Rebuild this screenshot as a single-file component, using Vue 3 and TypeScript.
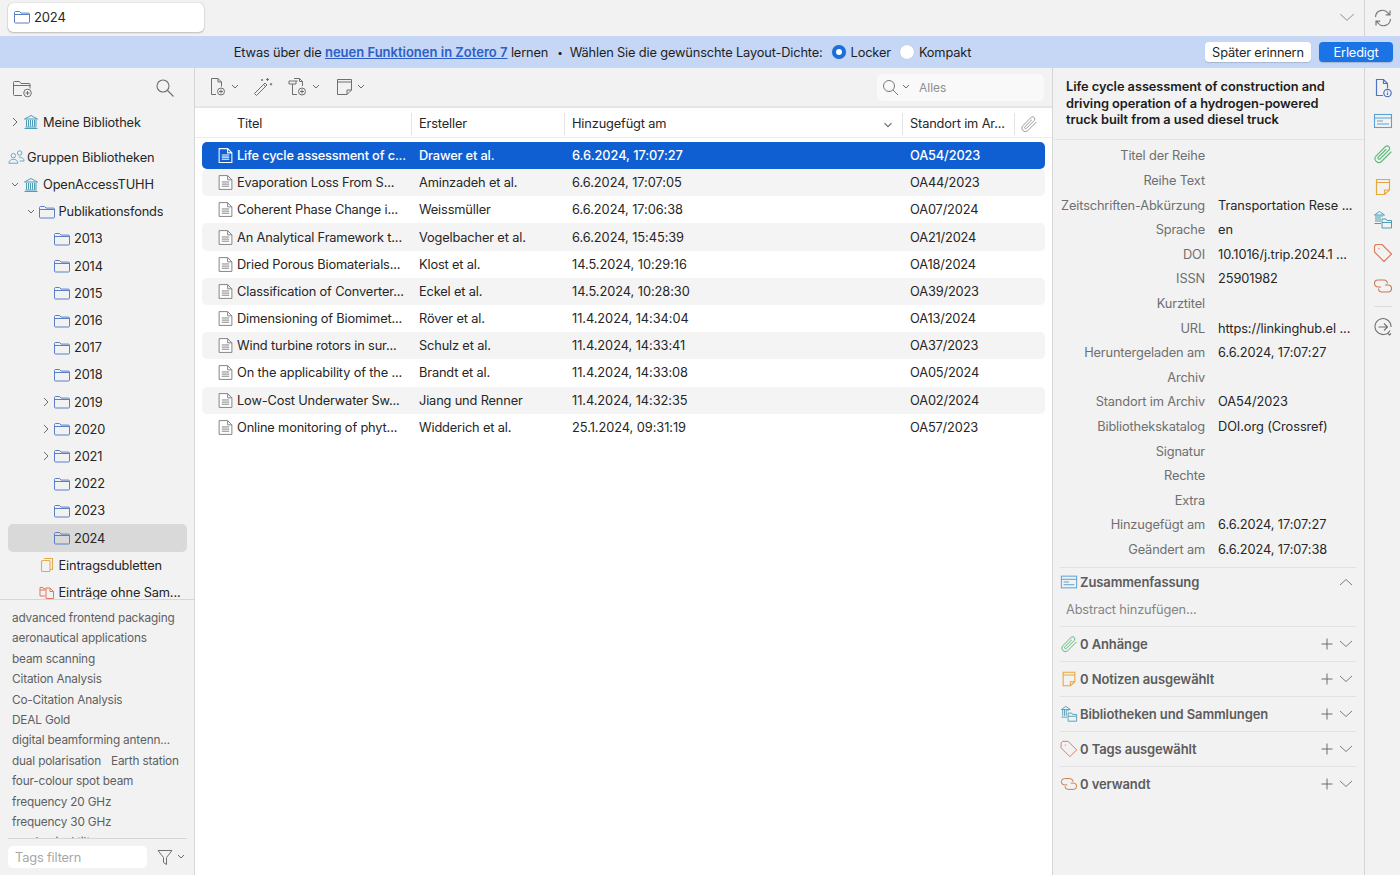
<script setup lang="ts">
interface TreeRow { label: string; indent: number; icon: string; arrow?: 'right' | 'down'; selected?: boolean; gap?: boolean }
const folders: TreeRow[] = ['2013','2014','2015','2016','2017','2018','2019','2020','2021','2022','2023','2024'].map((y) => ({
  label: y, indent: 2, icon: 'i-folder',
  arrow: ['2019','2020','2021'].includes(y) ? 'right' as const : undefined,
  selected: y === '2024',
}))
const tree: TreeRow[] = [
  { label: 'OpenAccessTUHH', indent: 0, icon: 'i-library', arrow: 'down' },
  { label: 'Publikationsfonds', indent: 1, icon: 'i-folder', arrow: 'down' },
  ...folders,
  { label: 'Eintragsdubletten', indent: 1, icon: 'i-dup' },
  { label: 'Einträge ohne Sam...', indent: 1, icon: 'i-unfiled' },
]
const tags: string[][] = [
  ['advanced frontend packaging'], ['aeronautical applications'], ['beam scanning'], ['Citation Analysis'],
  ['Co-Citation Analysis'], ['DEAL Gold'], ['digital beamforming antenn...'], ['dual polarisation', 'Earth station'],
  ['four-colour spot beam'], ['frequency 20 GHz'], ['frequency 30 GHz'], ['mechanical tilt'],
]
const items = [
  ['Life cycle assessment of c...', 'Drawer et al.', '6.6.2024, 17:07:27', 'OA54/2023'],
  ['Evaporation Loss From S...', 'Aminzadeh et al.', '6.6.2024, 17:07:05', 'OA44/2023'],
  ['Coherent Phase Change i...', 'Weissmüller', '6.6.2024, 17:06:38', 'OA07/2024'],
  ['An Analytical Framework t...', 'Vogelbacher et al.', '6.6.2024, 15:45:39', 'OA21/2024'],
  ['Dried Porous Biomaterials...', 'Klost et al.', '14.5.2024, 10:29:16', 'OA18/2024'],
  ['Classification of Converter...', 'Eckel et al.', '14.5.2024, 10:28:30', 'OA39/2023'],
  ['Dimensioning of Biomimet...', 'Röver et al.', '11.4.2024, 14:34:04', 'OA13/2024'],
  ['Wind turbine rotors in sur...', 'Schulz et al.', '11.4.2024, 14:33:41', 'OA37/2023'],
  ['On the applicability of the ...', 'Brandt et al.', '11.4.2024, 14:33:08', 'OA05/2024'],
  ['Low-Cost Underwater Sw...', 'Jiang und Renner', '11.4.2024, 14:32:35', 'OA02/2024'],
  ['Online monitoring of phyt...', 'Widderich et al.', '25.1.2024, 09:31:19', 'OA57/2023'],
]
const fields = [
  ['Titel der Reihe', ''], ['Reihe Text', ''], ['Zeitschriften-Abkürzung', 'Transportation Rese ...'], ['Sprache', 'en'],
  ['DOI', '10.1016/j.trip.2024.1 ...'], ['ISSN', '25901982'], ['Kurztitel', ''], ['URL', 'https://linkinghub.el ...'],
  ['Heruntergeladen am', '6.6.2024, 17:07:27'], ['Archiv', ''], ['Standort im Archiv', 'OA54/2023'],
  ['Bibliothekskatalog', 'DOI.org (Crossref)'], ['Signatur', ''], ['Rechte', ''], ['Extra', ''],
  ['Hinzugefügt am', '6.6.2024, 17:07:27'], ['Geändert am', '6.6.2024, 17:07:38'],
]
const sections = [
  { label: '0 Anhänge', icon: 'i-clip' }, { label: '0 Notizen ausgewählt', icon: 'i-note' },
  { label: 'Bibliotheken und Sammlungen', icon: 'i-libs' }, { label: '0 Tags ausgewählt', icon: 'i-tag' },
  { label: '0 verwandt', icon: 'i-link' },
]
const rail = ['i-info', 'i-abstract', 'i-clip', 'i-note', 'i-libs', 'i-tag', 'i-link']
</script>

<template>
  <div class="app">
    <svg class="defs" aria-hidden="true">
      <symbol id="i-folder" viewBox="0 0 16 16"><path d="M.5 3.600C.5 2.900 1 2.500 1.500 2.500h4.100l1.400 1.600h7.500c.6 0 1 .4 1 1v7.900c0 .6-.4 1-1 1H1.500c-.6 0-1-.4-1-1zM.5 5.500h15" fill="none" stroke="#5b7fc7" stroke-width="1"/></symbol>
      <symbol id="i-library" viewBox="0 0 16 16"><g fill="none" stroke="#4d9db8" stroke-width="1"><path d="M1.500 5 8 1.500 14.500 5zM1.500 14.500h13M2.500 13h11"/><path d="M3.500 6v6.500M5.500 6v6.500M7.500 6v6.500M9.500 6v6.500M11.500 6v6.500M13 6v6.500"/></g></symbol>
      <symbol id="i-dup" viewBox="0 0 16 16"><g fill="none" stroke="#e2ac4d" stroke-width="1.100"><path d="M5 1.500h8.500v11H11"/><rect x="2.500" y="3.500" width="8.500" height="11" rx="1"/></g></symbol>
      <symbol id="i-unfiled" viewBox="0 0 16 16"><g fill="none" stroke="#e0775c" stroke-width="1"><path d="M1 6V3.500h3l1 1.500h2M1 6v6h5M1 6h5"/><path d="M7 4h4l3.500 3.500v7H7zM11 4v3.500h3.500"/></g></symbol>
      <symbol id="i-doc" viewBox="0 0 16 16"><path d="M2 1.500h8L14 5.500v9H2zM10 1.500v4h4M4.500 7.500h7M4.500 9.500h7M4.500 11.500h7" fill="#fff" stroke="#808080" stroke-width=".9"/></symbol>
      <symbol id="i-doc-sel" viewBox="0 0 16 16"><path d="M2 1.500h8L14 5.500v9H2zM10 1.500v4h4M4.500 7.500h7M4.500 9.500h7M4.500 11.500h7" fill="#0f5fd2" stroke="#fff" stroke-width="1"/></symbol>
      <symbol id="i-info" viewBox="0 0 20 20"><g fill="none" stroke="#4f74c4" stroke-width="1.200"><path d="M10 17.500H3.500v-16h7l4 4v5M10.500 1.500v4h4"/><circle cx="14.500" cy="15" r="3.700"/><path d="M14.500 14.500v2.500M14.500 12.800v.7"/></g></symbol>
      <symbol id="i-abstract" viewBox="0 0 20 20"><g fill="none" stroke="#5aa1d6" stroke-width="1.100"><rect x="1.500" y="3.500" width="17" height="13"/><path d="M1.500 7h17M4 10h6M4 13h12"/></g></symbol>
      <symbol id="i-clip" viewBox="0 0 20 20"><path d="M18 8 8.500 17.500a3.900 3.900 0 0 1-5.500-5.500L12.500 2.500a2.500 2.500 0 0 1 3.500 3.500L7 15a1.300 1.300 0 0 1-1.800-1.800L13 5.500" fill="none" stroke="#5cb878" stroke-width="1.100" stroke-linecap="round"/></symbol>
      <symbol id="i-note" viewBox="0 0 20 20"><path d="M3.500 2.500h13V13l-5 4.500h-8zM3.500 5.500h13M16.500 13H11.500v4.500" fill="none" stroke="#e8a73d" stroke-width="1.200"/></symbol>
      <symbol id="i-libs" viewBox="0 0 20 20"><g fill="none" stroke="#4d9db8" stroke-width="1"><path d="M1.500 5 6.500 1.500 11.500 5zM1.500 13.500h6.500M3 5.500v6.500M5 5.500v6.500M7 5.500v6.500M9 5.500v1.500"/><path d="M9 10.500V9h4l1 1.500h4.500v7.500H9zM9 12.500h9.500"/></g></symbol>
      <symbol id="i-tag" viewBox="0 0 20 20"><path d="M1.500 3 3 1.500H9L18.500 11l-7.500 7.500-9.500-9.500zM5.700 5.700h.4" fill="none" stroke="#e07a5f" stroke-width="1.100" stroke-linejoin="round" stroke-linecap="round"/></symbol>
      <symbol id="i-link" viewBox="0 0 20 20"><g fill="none" stroke="#c97b4e" stroke-width="1.100"><path d="M8 11H5a3.500 3.500 0 0 1 0-7h6a3.500 3.500 0 0 1 3.500 3.500"/><path d="M12 9h3a3.500 3.500 0 0 1 0 7H9a3.500 3.500 0 0 1-3.500-3.500"/></g></symbol>
      <symbol id="i-plus" viewBox="0 0 12 12"><path d="M6 .5v11M.5 6h11" fill="none" stroke="#6d6d6d" stroke-width="1"/></symbol>
      <symbol id="i-down" viewBox="0 0 14 8"><path d="M1 1l6 5.500L13 1" fill="none" stroke="#7d7d7d" stroke-width="1"/></symbol>
      <symbol id="i-mini" viewBox="0 0 8 6"><path d="M1 1l3 3 3-3" fill="none" stroke="#6a6a6a" stroke-width="1"/></symbol>
      <symbol id="i-right" viewBox="0 0 6 10"><path d="M1 1l4 4-4 4" fill="none" stroke="#6a6a6a" stroke-width="1"/></symbol>
    </svg>

    <header class="topbar">
      <div class="tab">
        <svg class="ic16"><use href="#i-folder" /></svg>
        <span>2024</span>
      </div>
      <div class="grow"></div>
      <svg class="top-chevron"><use href="#i-down" /></svg>
      <div class="top-sync">
        <svg width="20" height="20" viewBox="0 0 20 20" fill="none" stroke="#7a7a7a" stroke-width="1.200">
          <path d="M2.500 9a7 7 0 0 1 12.500-4l1.500 1.800M17 2.500v4.300h-4.300" />
          <path d="M17.500 11a7 7 0 0 1-12.500 4l-1.500-1.800M3 17.500v-4.300h4.300" />
        </svg>
      </div>
    </header>

    <div class="banner">
      <div class="banner-msg">
        <span>Etwas über die <a class="link">neuen Funktionen in Zotero 7</a> lernen</span>
        <span class="dot">•</span>
        <span>Wählen Sie die gewünschte Layout-Dichte:</span>
        <span class="radio on"></span><span class="radio-label">Locker</span>
        <span class="radio"></span><span>Kompakt</span>
      </div>
      <button class="btn">Später erinnern</button>
      <button class="btn primary">Erledigt</button>
    </div>

    <main class="main">
      <aside class="left">
        <div class="left-tools">
          <svg width="22" height="22" viewBox="0 0 22 22" fill="none" stroke="#6f6f6f" stroke-width="1">
            <path d="M11 18.500H3.500a1 1 0 0 1-1-1V5.500a1 1 0 0 1 1-1h5l1.500 2h8a1 1 0 0 1 1 1v4M2.500 8.500h17" />
            <circle cx="16.500" cy="16" r="3.800" /><path d="M16.500 14v4M14.500 16h4" />
          </svg>
          <svg width="20" height="20" viewBox="0 0 20 20" fill="none" stroke="#6f6f6f" stroke-width="1.100">
            <circle cx="8" cy="8" r="6" /><path d="M12.500 12.500l6 6" />
          </svg>
        </div>
        <div class="tree">
          <div class="tree-row lib">
            <span class="arrow"><svg class="right"><use href="#i-right" /></svg></span>
            <svg class="ic16"><use href="#i-library" /></svg>
            <span class="tree-label">Meine Bibliothek</span>
          </div>
          <div class="tree-row groups">
            <svg width="17" height="16" viewBox="0 0 19 17" fill="none" stroke="#5aa3c7" stroke-width="1">
              <circle cx="6" cy="7" r="2.500" /><circle cx="13" cy="4" r="2.500" />
              <path d="M1 15.500c0-6 10-6 10 0zM12 8.500c3 0 6 1.500 6 4.500h-5" />
            </svg>
            <span class="tree-label">Gruppen Bibliotheken</span>
          </div>
          <div v-for="r in tree" :key="r.label" class="tree-row" :class="['lvl' + r.indent, { selected: r.selected }]">
            <span class="arrow">
              <svg v-if="r.arrow === 'right'" class="right"><use href="#i-right" /></svg>
              <svg v-else-if="r.arrow === 'down'" class="mini"><use href="#i-mini" /></svg>
            </span>
            <svg class="ic16"><use :href="'#' + r.icon" /></svg>
            <span class="tree-label">{{ r.label }}</span>
          </div>
        </div>
        <div class="tags">
          <div v-for="(row, i) in tags" :key="i" class="tag-row">
            <span v-for="t in row" :key="t">{{ t }}</span>
          </div>
        </div>
        <div class="tag-filter">
          <div class="tag-input">Tags filtern</div>
          <svg width="16" height="17" viewBox="0 0 16 17" fill="none" stroke="#6f6f6f" stroke-width="1">
            <path d="M1 1.500h14L9.500 8.500v7l-3-2v-5z" />
          </svg>
          <svg class="mini"><use href="#i-mini" /></svg>
        </div>
      </aside>

      <section class="center">
        <div class="toolbar">
          <span class="tool">
            <svg width="20" height="20" viewBox="0 0 20 20" fill="none" stroke="#6f6f6f" stroke-width="1">
              <path d="M8 17.500H3.500v-16h6.500l3.500 3.500v4.500M10 1.500V5h3.500" /><circle cx="13" cy="14.500" r="3.500" /><path d="M13 12.500v4M11 14.500h4" />
            </svg>
            <svg class="mini"><use href="#i-mini" /></svg>
          </span>
          <span class="tool wand">
            <svg width="20" height="20" viewBox="0 0 20 20" fill="none" stroke="#6f6f6f" stroke-width="1">
              <path d="M1.500 16.500 12 6l2 2L3.500 18.500zM10.500 7.500l2 2" />
              <path d="M14.500 1v3M13 2.500h3M18 6v2.500M16.800 7.200h2.400M9 2v2M8 3h2" />
            </svg>
          </span>
          <span class="tool">
            <svg width="22" height="20" viewBox="0 0 22 20" fill="none" stroke="#6f6f6f" stroke-width="1">
              <path d="M10 17.500H5.500V7M2 7V4h8.500M7 1.500h5.500l3 3v4.500M12.500 1.500V4.500h3M2 7h7V4" /><circle cx="15" cy="14.500" r="3.500" /><path d="M15 12.500v4M13 14.500h4" />
            </svg>
            <svg class="mini"><use href="#i-mini" /></svg>
          </span>
          <span class="tool note-tool">
            <svg width="18" height="20" viewBox="0 0 18 20" fill="none" stroke="#6f6f6f" stroke-width="1">
              <path d="M1.500 2.500h14V13l-4.500 4.500H1.500zM1.500 5h14M15.500 13H11v4.500" />
            </svg>
            <svg class="mini"><use href="#i-mini" /></svg>
          </span>
          <div class="grow"></div>
          <div class="search">
            <svg width="17" height="17" viewBox="0 0 17 17" fill="none" stroke="#7a7a7a" stroke-width="1">
              <circle cx="7" cy="7" r="5.500" /><path d="M11 11l5 5" />
            </svg>
            <svg class="mini"><use href="#i-mini" /></svg>
            <span class="search-text">Alles</span>
          </div>
        </div>
        <div class="grid-row head">
          <div class="cell title-head">Titel</div>
          <div class="cell bordered">Ersteller</div>
          <div class="cell bordered sort">Hinzugefügt am<svg class="sort-ic"><use href="#i-mini" /></svg></div>
          <div class="cell bordered">Standort im Ar...</div>
          <div class="cell bordered clip-head">
            <svg width="18" height="18" viewBox="0 0 20 20" fill="none" stroke="#9a9a9a" stroke-width="1.100" stroke-linecap="round">
              <path d="M18 8 8.500 17.500a3.900 3.900 0 0 1-5.500-5.500L12.500 2.500a2.500 2.500 0 0 1 3.500 3.500L7 15a1.300 1.300 0 0 1-1.800-1.800L13 5.500" />
            </svg>
          </div>
        </div>
        <div class="rows">
          <div v-for="(it, i) in items" :key="i" class="grid-row item" :class="{ sel: i === 0, alt: i % 2 === 1 }">
            <div class="cell title-cell">
              <svg class="doc"><use :href="i === 0 ? '#i-doc-sel' : '#i-doc'" /></svg>
              <span>{{ it[0] }}</span>
            </div>
            <div class="cell">{{ it[1] }}</div>
            <div class="cell num">{{ it[2] }}</div>
            <div class="cell">{{ it[3] }}</div>
            <div class="cell"></div>
          </div>
        </div>
      </section>

      <section class="detail">
        <h1 class="detail-title">Life cycle assessment of construction and driving operation of a hydrogen-powered truck built from a used diesel truck</h1>
        <div class="fields">
          <template v-for="f in fields" :key="f[0]">
            <div class="f-label">{{ f[0] }}</div>
            <div class="f-value">{{ f[1] }}</div>
          </template>
        </div>
        <div class="sec first">
          <svg class="sec-ic"><use href="#i-abstract" /></svg>
          <span class="sec-label">Zusammenfassung</span>
          <svg class="sec-chev up"><use href="#i-down" /></svg>
        </div>
        <div class="abstract">Abstract hinzufügen...</div>
        <div v-for="s in sections" :key="s.label" class="sec">
          <svg class="sec-ic"><use :href="'#' + s.icon" /></svg>
          <span class="sec-label">{{ s.label }}</span>
          <svg class="sec-plus"><use href="#i-plus" /></svg>
          <svg class="sec-chev"><use href="#i-down" /></svg>
        </div>
      </section>

      <nav class="rail">
        <svg v-for="r in rail" :key="r" class="rail-ic"><use :href="'#' + r" /></svg>
        <div class="rail-sep"></div>
        <svg width="20" height="20" viewBox="0 0 20 20" fill="none" stroke="#707070" stroke-width="1.100">
          <path d="M17 13.500A8 8 0 1 1 18 10M5.500 10h9M11 6.500l3.500 3.500-3.500 3.500" />
          <path d="M15 16.500l1.500 1.500 1.500-1.500" />
        </svg>
      </nav>
    </main>
  </div>
</template>

<style scoped>
.app { width: 1400px; height: 875px; overflow: hidden; display: flex; flex-direction: column; background: #f2f2f2; font-family: Inter, "Liberation Sans", sans-serif; font-size: 12.8px; color: #262626; letter-spacing: -0.15px; }
.defs { width: 0; height: 0; position: absolute; }
.grow { flex: 1; }
.ic16 { width: 16px; height: 16px; flex: none; }
.mini { width: 8px; height: 6px; flex: none; }
.right { width: 6px; height: 10px; flex: none; }

.topbar { height: 36px; flex: none; display: flex; align-items: center; padding-left: 8px; box-sizing: border-box; }
.tab { width: 196px; height: 29px; box-sizing: border-box; margin-top: -2px; background: #fff; border-radius: 5px; box-shadow: 0 0 1px rgba(0,0,0,.35), 0 1px 2px rgba(0,0,0,.2); display: flex; align-items: center; gap: 4px; padding-left: 6px; font-size: 13px; }
.top-chevron { width: 16px; height: 9px; margin-right: 9px; margin-top: -1px; opacity: .6; }
.top-sync { width: 35px; height: 36px; border-left: 1px solid #d4d4d4; display: flex; align-items: center; justify-content: center; box-sizing: content-box; }

.banner { height: 32px; flex: none; background: #c5d7f5; display: flex; align-items: center; padding: 0 7px 0 0; color: #1e1e1e; }
.banner-msg { flex: 1; display: flex; align-items: center; justify-content: center; padding-left: 8px; }
.link { color: #2c5fc7; font-weight: 600; text-decoration: underline; letter-spacing: 0; font-size: 13px; }
.dot { margin: 0 7px 0 9px; font-size: 10px; }
.radio { width: 14px; height: 14px; border-radius: 50%; background: #fff; margin: 0 5px 0 9px; box-sizing: border-box; box-shadow: 0 0 1px rgba(0,0,0,.2); }
.radio.on { background: #fff; border: 4px solid #1a6fdc; }
.btn { height: 20px; box-sizing: border-box; width: 106px; border: 0; border-radius: 4px; background: #fff; font: inherit; letter-spacing: inherit; color: #262626; padding: 0; box-shadow: 0 1px 1px rgba(0,0,0,.15); margin-left: 8px; }
.btn.primary { width: 74px; background: #1a74e6; color: #fff; margin-left: 8px; }

.main { flex: 1; min-height: 0; display: flex; }
.left { width: 195px; flex: none; box-sizing: border-box; border-right: 1px solid #d6d6d6; display: flex; flex-direction: column; }
.left-tools { height: 40px; flex: none; display: flex; align-items: center; justify-content: space-between; padding: 0 19px 0 11px; }
.tree { height: 492px; flex: none; overflow: hidden; box-sizing: border-box; padding: .8px 7px 0 8px; border-bottom: 1px solid #d6d6d6; }
.tree-row { height: 27.2px; display: flex; align-items: center; border-radius: 5px; white-space: nowrap; color: #262626; }
.lib { margin-bottom: 7.800px; }
.groups { gap: 2px; margin-left: 0; }
.groups svg { flex: none; }
.arrow { width: 14px; height: 16px; display: flex; align-items: center; justify-content: center; flex: none; margin-right: 1px; }
.tree-row .ic16 { margin-right: 4px; }
.tree-label { overflow: hidden; text-overflow: ellipsis; }
.lvl1 { padding-left: 15.500px; }
.lvl2 { padding-left: 31px; }
.selected { background: #d9d9d9; }

.tags { height: 238px; flex: none; overflow: hidden; padding: 7.800px 8px 0 12px; box-sizing: border-box; font-size: 11.800px; color: #5f5f5f; letter-spacing: -0.17px; }
.tag-row { height: 20.400px; display: flex; gap: 10px; align-items: center; white-space: nowrap; }
.tag-filter { flex: 1; border-top: 1px solid #d6d6d6; margin: 0 7px 0 8px; display: flex; align-items: center; gap: 4px; }
.tag-input { width: 139px; height: 22px; box-sizing: border-box; background: #fff; border-radius: 5px; color: #a8a8a8; padding-left: 7px; line-height: 23px; margin-right: 6px; }

.center { width: 858px; flex: none; background: #fff; box-sizing: border-box; border-right: 1px solid #d6d6d6; display: flex; flex-direction: column; }
.toolbar { height: 40px; flex: none; box-sizing: border-box; background: #f2f2f2; border-bottom: 2px solid #e6e6e6; display: flex; align-items: center; padding: 0 8px 0 13px; gap: 14px; }
.tool { display: flex; align-items: center; gap: 3px; }
.note-tool { margin-left: 2px; }
.search { width: 167px; height: 27px; background: #f9f9f9; border-radius: 5px; display: flex; align-items: center; gap: 3px; padding-left: 5px; box-sizing: border-box; }
.search-text { color: #8f8f8f; margin-left: 6px; font-size: 12px; letter-spacing: 0; }

.grid-row { display: grid; grid-template-columns: 216px 153px 338px 112px 31px; }
.head { height: 30px; margin: 0 0 3px 0; padding: 2px 7px 0 0; border-bottom: 1px solid #ececec; box-sizing: border-box; align-items: center; }
.cell { padding-left: 8px; white-space: nowrap; overflow: hidden; display: flex; align-items: center; }
.num { letter-spacing: -0.05px; }
.title-head { padding-left: 42px; }
.bordered { height: 22px; border-left: 1px solid #e4e4e4; padding-left: 7px; }
.sort { position: relative; }
.sort-ic { position: absolute; right: 9px; top: 9px; width: 10px; height: 7px; }
.clip-head { padding-left: 5px; }
.rows { padding: .9px 7px 0 7px; }
.item { height: 27.2px; grid-template-columns: 209px 153px 338px 112px 31px; border-radius: 5px; align-items: center; }
.item.alt { background: #f4f4f4; }
.item.sel { background: #0f5fd2; color: #fff; font-weight: 500; }
.title-cell { padding-left: 15px; }
.doc { width: 17px; height: 17px; flex: none; margin-right: 3px; }

.detail { flex: 1; min-width: 0; box-sizing: border-box; border-right: 1px solid #d6d6d6; padding: 0 8px 0 7px; }
.detail-title { margin: 0 -8px 0 -7px; height: 72px; box-sizing: border-box; padding: 11px 30px 0 13px; border-bottom: 1px solid #e4e4e4; font-size: 12.800px; letter-spacing: -0.05px; line-height: 16.500px; font-weight: 600; color: #1c1c1c; }
.fields { display: grid; grid-template-columns: 145px 1fr; column-gap: 13px; grid-auto-rows: 24.600px; align-items: center; padding-top: 3.700px; padding-bottom: 5.300px; white-space: nowrap; }
.f-label { text-align: right; color: #6f6f6f; margin-left: -8px; }
.f-value { color: #262626; overflow: hidden; letter-spacing: -0.08px; }
.sec { height: 35px; box-sizing: border-box; display: flex; align-items: center; border-top: 1px solid #e2e2e2; gap: 2px; }
.sec-ic { width: 18px; height: 18px; flex: none; }
.sec-label { flex: 1; font-weight: 600; font-size: 13px; letter-spacing: -0.1px; color: #5c5c5c; white-space: nowrap; }
.sec-plus { width: 12px; height: 12px; margin-right: 4px; }
.sec-chev { width: 14px; height: 8px; margin-right: 3px; }
.sec-chev.up { transform: rotate(180deg); }
.sec.first { height: 28px; }
.abstract { height: 31px; box-sizing: border-box; padding: 0 0 3px 6px; color: #858585; display: flex; align-items: center; }

.rail { flex: none; width: 35px; display: flex; flex-direction: column; align-items: center; padding-top: 10px; gap: 13px; box-sizing: border-box; }
.rail-ic { width: 20px; height: 20px; flex: none; }
.rail-sep { width: 18px; height: 1px; background: #dedede; margin: -3px 0; }
</style>
